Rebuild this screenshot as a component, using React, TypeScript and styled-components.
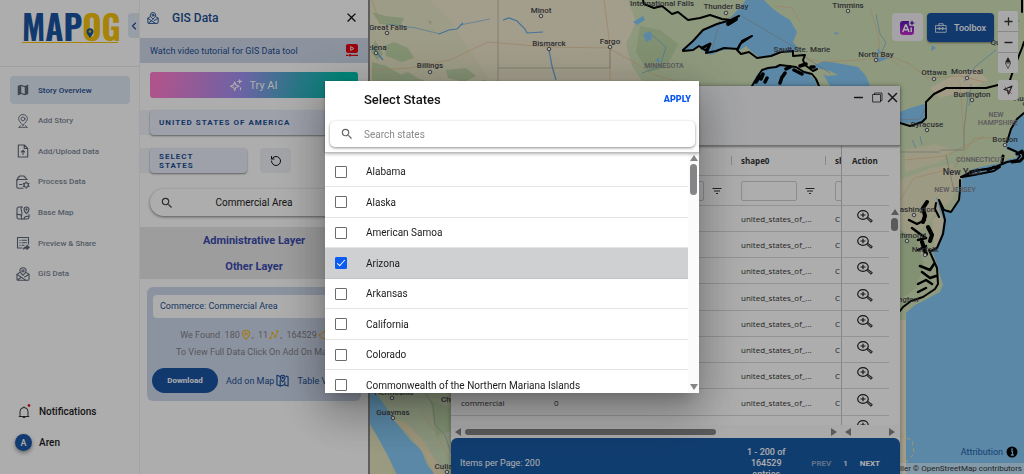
import React from "react";
import styled, { createGlobalStyle, css } from "styled-components";
import { MdSearch, MdClose, MdMap, MdFilterList } from "react-icons/md";
import { RotateCcw } from "lucide-react";

const GlobalStyle = createGlobalStyle`
  *, *::before, *::after { box-sizing: border-box; }
  body { margin: 0; font-family: Roboto, "Liberation Sans", sans-serif; font-size: 10px; color: #1c1c1c; overflow: hidden; }
  button, input { font-family: inherit; font-size: inherit; color: inherit; margin: 0; padding: 0; border: 0; background: none; }
  button { cursor: pointer; }
  a { color: inherit; text-decoration: none; }
  h1, h2, p, ul { margin: 0; padding: 0; font-weight: inherit; list-style: none; }
  svg { display: block; flex: none; }
`;

const navy = "#1a54a2";

/* ---------- page frame ---------- */

const Shell = styled.div`
  display: grid;
  grid-template-columns: 140px 228px minmax(0, 1fr);
  height: 100vh;
  overflow: hidden;
  background: #fff;
`;

/* ---------- sidebar ---------- */

const Sidebar = styled.aside`
  position: relative;
  display: flex;
  flex-direction: column;
  border-right: 1px solid #f0f0f2;
  min-height: 0;
`;

const LogoArea = styled.div`
  height: 67px;
  padding: 8px 0 0 20px;
  border-bottom: 1px solid #ececee;
`;

const CollapseTab = styled.button`
  position: absolute;
  top: 13px;
  right: 0;
  display: grid;
  place-items: center;
  width: 11px;
  height: 25px;
  border-radius: 4px 0 0 4px;
  background: #e0e9f5;
  color: #1a4a90;
`;

const Nav = styled.nav`
  display: grid;
  grid-auto-rows: 1fr;
  align-items: center;
  height: 214px;
  margin: 8px 9px 0 10px;
`;

const NavLink = styled.a<{ $active?: boolean }>`
  display: grid;
  grid-template-columns: 14px 1fr;
  align-items: center;
  gap: 8px;
  height: 28px;
  padding-left: 6px;
  border-radius: 4px;
  font-size: 8px;
  font-weight: 500;
  color: ${(p) => (p.$active ? "#1d4f92" : "#7d8796")};
  background: ${(p) => (p.$active ? "#e1e9f3" : "transparent")};
  svg { color: #5f6878; }
`;

const Account = styled.div`
  display: grid;
  gap: 14px;
  margin-top: auto;
  padding: 0 0 23px 15px;
`;

const AccountRow = styled.a`
  display: grid;
  grid-template-columns: 17px 1fr;
  align-items: center;
  gap: 7px;
  height: 17px;
  font-size: 10px;
  font-weight: 500;
`;

const Avatar = styled.span`
  display: grid;
  place-items: center;
  width: 17px;
  height: 17px;
  border-radius: 50%;
  background: #1b57a8;
  color: #fff;
  font-size: 9px;
  font-weight: 500;
  box-shadow: 0 2px 4px rgba(0, 0, 0, 0.4);
`;

/* ---------- data panel ---------- */

const Panel = styled.section`
  display: flex;
  flex-direction: column;
  min-height: 0;
  color: #1d4f92;
`;

const PanelHeader = styled.header`
  display: flex;
  align-items: center;
  gap: 13px;
  height: 38px;
  padding: 0 9px 3px 7px;
  h1 { flex: 1; font-size: 12px; font-weight: 500; }
`;

const IconButton = styled.button`
  display: grid;
  place-items: center;
  color: #111;
`;

const TutorialBar = styled.a`
  display: flex;
  align-items: center;
  justify-content: space-between;
  height: 25px;
  padding: 0 10px;
  background: #ced9ea;
  font-size: 9px;
`;

const PanelBody = styled.div`
  display: flex;
  flex-direction: column;
  padding: 9px 10px 11px;
`;

const AiButton = styled.button`
  display: flex;
  align-items: center;
  justify-content: center;
  gap: 7px;
  height: 26px;
  border-radius: 3px;
  background: linear-gradient(100deg, #ff7dd0 5%, #a193f4 44%, #3db0c6 70%, #00c6b3 92%);
  color: #fff;
  font-size: 11px;
`;

const FieldStrip = styled.div`
  display: flex;
  gap: 13px;
  height: 25px;
  margin: 12px 0 0 -10px;
  padding-left: 10px;
  background: linear-gradient(90deg, #f2f3f8 30px, transparent 30px);
  & + & { margin-top: 13px; }
`;

const FieldButton = styled.button<{ $narrow?: boolean }>`
  flex: ${(p) => (p.$narrow ? "0 0 97px" : "1")};
  padding: 0 ${(p) => (p.$narrow ? 30 : 9)}px 0 9px;
  border-radius: 4px;
  background: #e9edfb;
  box-shadow: 0 1px 2px rgba(0, 0, 0, 0.45);
  color: #1d4f92;
  font-size: 8px;
  line-height: 9px;
  font-weight: 700;
  letter-spacing: 1px;
  text-align: left;
`;

const ResetButton = styled(IconButton)`
  width: 31px;
  border-radius: 4px;
  background: #f1f2f7;
`;

const PillSearch = styled.label`
  display: grid;
  grid-template-columns: 14px 1fr 14px;
  align-items: center;
  height: 27px;
  margin-top: 16px;
  padding: 0 10px;
  border-radius: 14px;
  box-shadow: 0 1px 3px rgba(0, 0, 0, 0.5);
  color: #444;
  input { min-width: 0; text-align: center; color: #222; outline: 0; }
`;

const LayerTabs = styled.div`
  display: grid;
  grid-auto-rows: 26px;
  background: #e7e7e7;
  button { font-size: 11px; font-weight: 700; color: #3b4bb0; }
`;

const ResultCard = styled.article`
  display: grid;
  gap: 8px;
  margin: 8px 7px 0;
  padding: 8px 6px;
  border-radius: 6px;
  background: #ced9ec;
`;

const ResultTitle = styled.h2`
  padding: 0 7px;
  border-radius: 4px;
  background: #fff;
  font-size: 9px;
  line-height: 23px;
`;

const ResultNotes = styled.div`
  display: grid;
  grid-auto-rows: 17px;
`;

const ResultNote = styled.p`
  display: flex;
  align-items: center;
  justify-content: center;
  gap: 1px;
  font-size: 9px;
  white-space: nowrap;
  color: #7f8186;
  svg { color: #f2b521; }
`;

const ResultActions = styled.div`
  display: flex;
  align-items: center;
  gap: 8px;
  margin-left: -1px;
  font-size: 8px;
  white-space: nowrap;
`;

const DownloadButton = styled.button`
  width: 66px;
  height: 25px;
  border-radius: 13px;
  background: ${navy};
  color: #fff;
  font-weight: 700;
`;

const TextButton = styled.button`
  display: flex;
  align-items: center;
  gap: 2px;
  color: #1d4f92;
  font-size: 9px;
`;

/* ---------- map ---------- */

const MapArea = styled.main`
  position: relative;
  overflow: hidden;
  border-left: 2px solid #8a8a8a;
  background: #85c9f5;
`;

const MapDrawing = styled.svg`
  position: absolute;
  inset: 0;
  width: 100%;
  height: 100%;
`;

const MapTools = styled.div`
  position: absolute;
  top: 11px;
  right: 6px;
  display: flex;
  gap: 4px;
  align-items: flex-start;
`;

const AiTile = styled.button`
  display: grid;
  place-items: center;
  width: 31px;
  height: 28px;
  margin-top: 2px;
  border-radius: 4px;
  background: #f4f0f6;
`;

const ToolboxButton = styled.button`
  display: flex;
  align-items: center;
  gap: 7px;
  height: 29px;
  margin-top: 2px;
  padding: 0 8px;
  border-radius: 4px;
  background: ${navy};
  box-shadow: 0 1px 2px rgba(0, 0, 0, 0.4);
  color: #fff;
  font-size: 9px;
  font-weight: 500;
`;

const ControlStack = styled.div`
  display: grid;
  gap: 7px;
`;

const ControlGroup = styled.div`
  display: grid;
  border-radius: 2px;
  background: #f8f8f8;
  button { display: grid; place-items: center; width: 20px; height: 20px; color: #333; }
  button + button { border-top: 1px solid #c8c8c8; height: 21px; }
`;

const AttributionLink = styled.a`
  position: absolute;
  right: 6px;
  bottom: 16px;
  display: flex;
  align-items: center;
  gap: 3px;
  font-size: 9px;
  color: #1d5ca6;
`;

const Credits = styled.p`
  position: absolute;
  right: 0;
  bottom: 0;
  padding: 0 2px 0 8px;
  background: rgba(255, 255, 255, 0.5);
  font-size: 8px;
  line-height: 11px;
  color: #333;
`;

/* ---------- table window ---------- */

const TableWindow = styled.section`
  position: absolute;
  top: 86px;
  right: 124px;
  width: 449px;
  background: #fff;
  font-family: "Open Sans", "Noto Sans", sans-serif;
  font-size: 8px;
  color: #333;
  box-shadow: 0 0 5px rgba(0, 0, 0, 0.35);
`;

const WindowBar = styled.header`
  position: relative;
  display: flex;
  justify-content: flex-end;
  align-items: flex-start;
  gap: 4px;
  height: 60px;
  padding: 5px 2px 0 0;
  background: #f3f4f6;
  border-bottom: 1px solid #a5a5a7;
  box-shadow: 0 1px 2px rgba(0, 0, 0, 0.4);
  button { display: grid; place-items: center; width: 11px; height: 13px; color: #222; }
  button:first-child { margin-right: 4px; }
`;

const GridArea = styled.div`
  display: grid;
  grid-template-columns: minmax(0, 1fr) 11px;
  height: 279px;
  overflow: hidden;
`;

const DataTable = styled.table`
  width: 100%;
  table-layout: fixed;
  border-collapse: separate;
  border-spacing: 0;
  align-self: start;
  th, td {
    overflow: hidden;
    padding: 0 0 0 10px;
    border-bottom: 1px solid #d9d9d9;
    text-align: left;
    white-space: nowrap;
  }
  thead tr { height: 30px; }
  tbody tr { height: 26px; }
  tbody tr:nth-child(4n) { height: 27px; }
  th:last-child, td:last-child { border-left: 1px solid #c4c4c6; }
  td:last-child { padding: 0 0 4px 15px; }
  thead tr:first-child th:not(:last-child) {
    background: linear-gradient(#c9c9c9, #c9c9c9) 0 10px / 1px 9px no-repeat;
  }
`;

const FilterCell = styled.div`
  display: flex;
  align-items: center;
  gap: 7px;
  input {
    flex: 0 0 56px;
    width: 56px;
    min-width: 0;
    height: 20px;
    border: 1px solid #cfcfd2;
    border-radius: 2px;
  }
`;

const VerticalTrack = styled.div<{ $top: number }>`
  display: flex;
  flex-direction: column;
  align-items: center;
  gap: 3px;
  padding: ${(p) => p.$top}px 0 3px;
`;

const Arrow = styled.span<{ $dir: "up" | "down" | "left" | "right" }>`
  width: 0;
  height: 0;
  flex: none;
  ${(p) => {
    const c = "#858587";
    const v = css`border-left: 4px solid transparent; border-right: 4px solid transparent;`;
    const h = css`border-top: 4px solid transparent; border-bottom: 4px solid transparent;`;
    if (p.$dir === "up") return css`${v} border-bottom: 6px solid ${c};`;
    if (p.$dir === "down") return css`${v} border-top: 6px solid ${c}; margin-top: auto;`;
    if (p.$dir === "left") return css`${h} border-right: 6px solid ${c};`;
    return css`${h} border-left: 6px solid ${c};`;
  }}
`;

const Thumb = styled.span<{ $w: number; $h: number }>`
  width: ${(p) => p.$w}px;
  height: ${(p) => p.$h}px;
  border-radius: 4px;
  background: #858587;
`;

const HorizontalTrack = styled.div`
  display: flex;
  align-items: center;
  gap: 4px;
  height: 13px;
  padding: 0 5px 0 4px;
  background: #fbfbfb;
`;

const TrackSpace = styled.span<{ $w?: number }>`
  flex: ${(p) => (p.$w === undefined ? "1" : `0 0 ${p.$w}px`)};
`;

const TableFooter = styled.footer`
  display: flex;
  align-items: center;
  height: 50px;
  padding: 0 20px 0 9px;
  border-radius: 6px 6px 0 0;
  background: #185aa6;
  font-family: Roboto, "Liberation Sans", sans-serif;
  font-size: 8px;
  font-weight: 500;
  line-height: 11px;
  color: #fff;
`;

const PageSize = styled.span`
  flex: 1;
  font-size: 9px;
  font-weight: 400;
`;

const Range = styled.span`
  width: 50px;
  margin-right: 20px;
  font-size: 9px;
  text-align: center;
`;

const Pager = styled.div`
  display: flex;
  gap: 12px;
  font-size: 8px;
  button { font-weight: 700; }
  button:disabled { color: #8fa9cb; }
`;

/* ---------- dialog ---------- */

const Backdrop = styled.div`
  position: fixed;
  inset: 0;
  display: grid;
  place-items: center;
  background: rgba(0, 0, 0, 0.32);
`;

const Dialog = styled.div`
  display: flex;
  flex-direction: column;
  width: 374px;
  height: 312px;
  max-width: 100%;
  background: #fff;
  box-shadow: 0 11px 15px -7px rgba(0, 0, 0, 0.2), 0 24px 38px 3px rgba(0, 0, 0, 0.14), 0 9px 46px 8px rgba(0, 0, 0, 0.2);
`;

const DialogTop = styled.div`
  position: relative;
  padding: 0 4px 5px 5px;
  border-bottom: 1px solid #bdbdbd;
  box-shadow: 0 1px 3px rgba(0, 0, 0, 0.3);
`;

const DialogTitle = styled.div`
  display: flex;
  align-items: center;
  justify-content: space-between;
  height: 40px;
  padding: 0 4px 4px 34px;
  h2 { font-size: 13px; font-weight: 500; color: #111; }
  button { font-size: 9px; font-weight: 900; color: #0a57f0; }
`;

const SearchField = styled.label`
  display: grid;
  grid-template-columns: 14px 1fr;
  align-items: center;
  gap: 10px;
  height: 26px;
  padding: 0 10px;
  border-radius: 5px;
  box-shadow: 0 1px 3px rgba(0, 0, 0, 0.45);
  color: #666;
  input { outline: 0; min-width: 0; color: #222; }
  input::placeholder { color: #8a8a8a; opacity: 1; }
`;

const ListArea = styled.div`
  display: grid;
  grid-template-columns: minmax(0, 1fr) 11px;
  flex: 1;
  min-height: 0;
  overflow: hidden;
  > div { background: #fbfbfb; }
`;

const StateList = styled.ul`
  padding-top: 4px;
  overflow: hidden;
`;

const StateItem = styled.li`
  height: 30px;
  border-bottom: 1px solid #e4e4e6;
  &:nth-child(even) { height: 31px; }
  &:has(input:checked) { background: #cfd0d2; border-color: #c3c4c6; }
`;

const StateLabel = styled.label`
  display: flex;
  align-items: center;
  gap: 19px;
  height: 100%;
  padding-left: 10px;
  color: #1a1a1a;
`;

const CheckBox = styled.input`
  appearance: none;
  display: grid;
  place-items: center;
  width: 12px;
  height: 12px;
  border: 1px solid #6b6b6b;
  border-radius: 1px;
  background: #fff;
  &:checked { background: #0a5bf2; border-color: #0a5bf2; }
  &:checked::after {
    content: "";
    width: 4px;
    height: 8px;
    margin-top: -3px;
    border: solid #fff;
    border-width: 0 1px 1px 0;
    transform: rotate(42deg);
  }
`;

/* ---------- icons ---------- */

const Glyph = ({ children, size = 14, box = 14, width = 1.1 }: { children: React.ReactNode; size?: number; box?: number; width?: number }) => (
  <svg width={size} height={size} viewBox={`0 0 ${box} ${box}`} fill="none" stroke="currentColor" strokeWidth={width} strokeLinecap="round" strokeLinejoin="round" aria-hidden="true">
    {children}
  </svg>
);

const PinBaseIcon = () => (
  <Glyph width={0.9}>
    <path d="M7 11.2C4.600 8.700 2.600 6.700 2.600 4.700a4.400 4.200 0 0 1 8.800 0C11.400 6.700 9.400 8.700 7 11.200z" />
    <circle cx="7" cy="4.900" r="1.900" />
    <path d="M3 13.300h8M4.600 11.600L3 13.300M9.400 11.600l1.600 1.700" />
  </Glyph>
);
const UploadIcon = () => (
  <Glyph>
    <path d="M2.300 1h6l3.400 3.300V13H2.300zM8.200 1v3.500h3.500M7 10.500v-4M5.400 8L7 6.400 8.600 8" />
  </Glyph>
);
const ProcessIcon = () => (
  <Glyph>
    <path d="M7 13.200H2.200a1.400 1.400 0 0 1-1.400-1.400V4.500h5M.8 6.500l1-3.500 2-2h4l2.500 2.300v1.200M5 4.500h6.200M3.500 9.500h2.500" />
    <circle cx="10.200" cy="10" r="2.200" />
    <path d="M10.200 6.700v1M10.200 12.300v1M7.400 8.400l.9.500M12.100 11.100l.9.500M13 8.400l-.9.500M8.300 11.100l-.9.500" />
  </Glyph>
);
const BaseMapIcon = () => (
  <Glyph>
    <path d="M6.500 1H2.800A1.800 1.800 0 0 0 1 2.800v8.400A1.800 1.800 0 0 0 2.800 13h8.400a1.800 1.800 0 0 0 1.800-1.800V8.500" />
    <path d="M5.200 1c-1 3.500 1.800 4.500.5 8-.5 1.300-.7 3 0 4M1 8.500c1.800-.3 3.200.2 4.600 1M8 13c0-2 2-3 4.800-2.600" />
    <path d="M10.500 7.600C8.900 6 8 4.900 8 3.500a2.500 2.500 0 0 1 5 0c0 1.400-.9 2.500-2.500 4.100z" />
    <circle cx="10.500" cy="3.500" r=".6" />
  </Glyph>
);
const ShareDocIcon = () => (
  <Glyph>
    <path d="M6 12H1.500V1.500h11V8M3.800 4.200h.4M6 4.200h4.500M3.800 6.700h.4M6 6.700h4.500M3.800 9.200h.4M6 9.200h2" />
    <path d="M7.500 13c.4-1.700 1.600-2.300 3.400-2.300V9.200l2.400 2.200-2.400 2v-1.500c-1.500 0-2.500.2-3.400 1.100z" fill="currentColor" />
  </Glyph>
);
const GisIcon = ({ size = 14 }: { size?: number }) => (
  <Glyph size={size}>
    <path d="M3.600 5.600L1 7.200v5A1.100 1.100 0 0 0 2.100 13.300h9.800A1.100 1.100 0 0 0 13 12.200v-5l-2.600-1.600" />
    <path d="M1.200 7.500l8.500 5.600M12.800 7.500L8.600 9.900M5 10.500l-3.200 2.300" />
    <path d="M7 8.300C5 6.600 3.900 5.300 3.900 3.800a3.100 3.100 0 0 1 6.200 0c0 1.500-1.100 2.800-3.100 4.500z" />
    <circle cx="7" cy="3.800" r="1.100" />
  </Glyph>
);
const BellIcon = () => (
  <svg width="17" height="15" viewBox="0 0 17 15" fill="none" stroke="#333" aria-hidden="true">
    <path d="M5 11.500V7.500a4 4 0 0 1 8 0v4l1 1H4zM7.800 13.500h2.400M9 2.500v1" strokeLinejoin="round" />
    <circle cx="14" cy="1.500" r="1.400" fill="#e3202c" stroke="none" />
  </svg>
);
const VideoIcon = () => (
  <svg width="12" height="13" viewBox="0 0 12 13" aria-hidden="true">
    <rect width="12" height="9" rx="2" fill="#e30613" />
    <path d="M4.700 2.600l3.200 1.900-3.200 1.900z" fill="none" stroke="#fff" strokeWidth=".9" />
    <path d="M0 11.300h2.500M5 11.300h7" stroke="#e30613" strokeWidth="1.200" />
    <circle cx="4" cy="11.300" r="1.200" fill="#e30613" />
  </svg>
);
const SparkIcon = () => (
  <Glyph size={12} width={1.3}>
    <path d="M5.500 3.500L6.900 7l3.600 1.400L6.900 9.800 5.500 13.300 4.100 9.800.5 8.400 4.100 7zM11.300.8v4M9.300 2.800h4M12.300 10.200v2.400" />
  </Glyph>
);
const MapPinIcon = () => (
  <Glyph size={13} width={1.2}>
    <path d="M4 2.500L1 1.500v10l4 1.500 4-1.500 4 1.500V3l-2-.7M4.500 7v6M9.500 8.500v3" />
    <path d="M7.200 8.500C5.500 6.800 4.600 5.500 4.600 4a2.600 2.600 0 0 1 5.200 0c0 1.500-.9 2.800-2.600 4.500z" />
    <circle cx="7.200" cy="4" r=".7" />
  </Glyph>
);
const PointIcon = () => (
  <Glyph size={10} width={1.5}>
    <path d="M7 13C4 10 2 8 2 5.500a5 5 0 0 1 10 0C12 8 10 10 7 13z" />
    <circle cx="7" cy="5.500" r="1.600" />
  </Glyph>
);
const LineIcon = () => (
  <Glyph size={10} width={1.2}>
    <path d="M2 11.500l3-7 4 5 3-7.500" />
    <path d="M1.200 10.700h1.600v1.600H1.200zM4.200 3.500h1.600v1.600H4.200zM8.200 8.800h1.600v1.600H8.200zM11.200 1.200h1.600v1.600h-1.600z" fill="currentColor" />
  </Glyph>
);
const PolygonIcon = () => (
  <Glyph size={10} width={1.3}>
    <path d="M2 7l7.500-5 3 3-2.500 7-5.500-1z" />
    <circle cx="2" cy="7" r="1" /><circle cx="9.500" cy="2" r="1" /><circle cx="10" cy="12" r="1" />
  </Glyph>
);
const ZoomToIcon = () => (
  <svg width="16" height="13" viewBox="0 0 16 13" fill="none" stroke="#222" aria-hidden="true">
    <ellipse cx="6" cy="5" rx="5.300" ry="4.400" strokeWidth="1.200" />
    <path d="M3.500 5h5M6 2.800v4.400" strokeWidth="1.200" />
    <path d="M9.600 8.300l1.200-.9 4.500 3.200-1.200 1.700z" fill="#999" strokeWidth="1" />
  </svg>
);
const AiIcon = () => (
  <svg width="15" height="15" viewBox="0 0 15 15" aria-hidden="true">
    <defs>
      <linearGradient id="aiFill" x1="0" y1="0" x2="0" y2="1">
        <stop offset="0" stopColor="#5518b0" />
        <stop offset="1" stopColor="#c92bd0" />
      </linearGradient>
    </defs>
    <rect x="0" y="1" width="14" height="14" rx="3" fill="url(#aiFill)" />
    <circle cx="12" cy="3" r="3.300" fill="#f4f0f6" />
    <path d="M12 0l.8 2.200L15 3l-2.200.8L12 6l-.8-2.200L9 3l2.200-.8z" fill="#4b17a8" />
    <path d="M2.800 12L5.500 5h.8L9 12M3.800 9.800H8M11.200 7.500V12" fill="none" stroke="#fff" strokeWidth="1.500" />
  </svg>
);
const ToolboxIcon = () => (
  <Glyph size={12} width={0.9}>
    <path d="M1 4.200h12V12H1zM4.500 4.200V2h5v2.200M1 7.800h3.500M9.500 7.800H13M5.800 7.800h2.400M4.500 7v1.700h1.300V7zM8.200 7v1.700h1.300V7z" />
  </Glyph>
);

/* ---------- map content ---------- */

type Place = [string, number, number, number?, number?];

/* name, label centre x, baseline y, dot x, dot y */
const places: Place[] = [
  ["International Falls", 662, 6],
  ["Thunder Bay", 726, 9, 726, 13],
  ["Timmins", 848, 8, 848, 11],
  ["Minot", 541, 13, 541, 16],
  ["Great Falls", 388, 30, 387, 33],
  ["Helena", 374, 50, 376, 53],
  ["Bismarck", 549, 46, 549, 49],
  ["Fargo", 610, 44, 610, 47],
  ["Billings", 430, 68, 430, 72],
  ["Sault Ste. Marie", 802, 52],
  ["North Bay", 876, 57, 876, 60],
  ["Ottawa", 934, 75, 934, 79],
  ["Montreal", 967, 74, 967, 78],
  ["Québec", 1004, 45],
  ["Burlington", 972, 97, 972, 100],
  ["Augusta", 1029, 101, 1025, 104],
  ["Syracuse", 927, 127, 927, 130],
  ["Boston", 1005, 142, 1005, 145],
  ["Washington", 914, 212, 914, 215],
  ["Richmond", 908, 238, 907, 241],
  ["Norfolk", 925, 252, 925, 255],
  ["Wilmington", 898, 302],
  ["Guaymas", 393, 415, 393, 418],
  ["Hermosillo", 394, 395, 392, 398],
  ["Chihuahua", 460, 402],
  ["Culiacán", 450, 469, 447, 472],
];

const regions: [string, number, number][] = [
  ["MINNESOTA", 664, 68],
  ["NEW", 996, 117],
  ["HAMPSHIRE", 998, 125],
  ["CONNECTICUT", 980, 162],
  ["NEW JERSEY", 955, 192],
];

const MapPicture = () => (
  <MapDrawing viewBox="370 0 654 474" preserveAspectRatio="xMaxYMin slice" role="img" aria-label="Map of North America">
    <rect x="370" width="654" height="474" fill="#f0e9ce" />
    {/* woodland */}
    <path d="M628 0H1024V320H700V100L648 90 632 66 626 44 636 22z" fill="#d2e2b8" />
    <path d="M370 0h60l20 20 40 60H370z" fill="#e8e6c6" />
    <path d="M370 120h82v354h-82z" fill="#cddcb8" />
    <g fill="#efe5c4">
      <path d="M900 180l30-12 22-4 8 14-8 22-14 12-20 20-18 8zM905 150l30-6 20 6-15 12-35 10z" opacity=".7" />
      <path d="M930 88l26-14 22-6 10 12-18 10-30 8zM945 210l4 20-8 20-6-2-3-28z" />
    </g>
    <g fill="#b9d3a3" opacity=".8">
      <path d="M384 46l10-4 14 6 6 10-12 4-16-6zM372 12l14 4 18 2-4 8-20-2zM372 62l14 4 18 10 20 4 8 6h-60zM446 70l20-2 10 8-12 6-16-4zM428 20l4 2-2 3zM482 80l8 1v3h-8z" />
      <path d="M375 40l8 14-6 6-6-8zM392 78l16-6 14 9h-26zM640 26l20 4 18 14-12 24-18 4-12-20zM900 230l16 8 8 26-8 24-16 12zM430 400l20 8v24l-14 4z" />
    </g>
    {/* water */}
    <g fill="#85c9f5">
      <path d="M683 50l7-7 12-12 14-6 14-7 12-13 4-5h18l8 8 8 6 10 6 7 12-4 10 7 8-8 3-12-1-8 4-12 2-8-6-6-6-7 5-8-2-11 2-9 4-7-3-6-6-8 5z" />
      <path d="M751 86l6-12 8-5 14-3 14 1 4 3 10 2 8 8 2 6zM812 66l12-5 18 3 16 3 8 9 4 10h-40l-8-14z" />
      <path d="M900 112l10-4 14-4 3 3-2 15-25 2z" />
      <path d="M1024 113l-7 6-6 10-4 14-1 6 8 3 3 6-8 1-8 4-16 3-12 3-11 8-1 10-2 14-8 11-7-3-6-10-2-2 4 14 4 10-3 15-6 14-3 1 4 10 4 14 3 10-3 7-13 7-12 6-9 8v168h124z" />
      <path d="M370 393h6l10 14 7 12 10 12 8 10 10 8 6 16 8 9h-38l-6-12-8-14-7-14-6-8z" />
      <path d="M633 22l10-6 2 4-8 5zM643 34l8-3 1 8-6 3zM655 60l5-2-1 5zM875 56l14 2-10 4zM780 25l8 1-4 2zM834 32l5 1-3 2zM878 48l4 5-5 1zM932 45l4 3-5 3z" />
    </g>
    <path d="M804 66l12 2 14 3 8 4-10 1-14-4-10-1z" fill="#d2e2b8" />
    <path d="M370 424l8 14 10 18 7 18h-25z" fill="#e3e3bd" />
    <path d="M394 420l14 14 16 20 10 20h10l-20-32-18-20z" fill="#e9dcb6" />
    {/* rivers */}
    <g fill="none" stroke="#62a9e2" strokeWidth="1.200">
      <path d="M503 20l6-2 8 3 8 8 2 4 16-1M439 34l10-4 8-1 6-6M549 50l3 16 4 14M373 48l10 12" />
      <path d="M386 24l30 4 24 6M460 25l30-6M876 14l4 20 6 8-4 10M996 50l-20 16-12 16M971 84l-2 22M1020 20l-18 14M912 140l4 8M920 136l2 9M652 35l14 12-6 20-18 6" strokeWidth=".6" />
    </g>
    {/* roads and borders */}
    <g fill="none" stroke="#e8c193" strokeWidth=".7">
      <path d="M372 0l8 24M370 70l40-2 40-8 38-18 60 5 60 1 26 14 18 12 26 8M604 0l4 30 2 20 0 30M774 6l18 2 8 14M800 56l20 6 40-2 30-4 20 8 18 14 32-2 24 6M870 8l8 26 2 18 20 14M900 200l14-22 40-10 20-30 18 0M905 160l40-4 40-20M960 84l2 28 2 26M420 410l14 20 16 30" />
    </g>
    <g fill="none" stroke="#9d9d99" strokeWidth=".6">
      <path d="M498 0v68h112M498 68v20M610 50v18M722 20l18-5 54 32 14 12 22 14M720 20l-8 30M900 120l20-1 6-12M940 150h24v-20l4-34M900 152h40M946 155l8 36M425 393l8 12 2 20 10 10 6 18" />
    </g>
    {/* coastline */}
    <g fill="none" stroke="#000" strokeWidth="2" strokeLinecap="round" strokeLinejoin="round">
      <path d="M643 0l1 4 10 4 8-2 10 8 6-2 10 8 12-2 10-3 12 4 8 1M683 50l10-9 10-11 14-6 14-4 8-4M683 51l10-1 6-4 6 4 3-2-2 5 10-2 8-3 14 1 4-8 10-5-12 8-3 6 4 4 8-2 8 6 14-2 10-4 12-1 0 5 12-1-2 5 2 5 8 6 4-2" />
      <path d="M752 86l6-10 4-6 6-2 8-1 4-2 8 1 8 1 8 5 8 2 4 5 3 7" />
      <path d="M728 24l8-5" strokeWidth="4" />
      <path d="M702 48l8-4-3 7" strokeWidth="3" />
      <path d="M756 82l4-6M761 79l2-5M765 82l2-4M780 83l2-6M783 76l2-3M786 69l4-2M794 70l8 4M800 66l6-2M811 67l3 0" strokeWidth="3.500" />
      <path d="M900 123l10 3 12-4 4-4 0-16 8-8 12-6 40 0 12-3M1010 80l4-12 8-20 2-6M1022 0v12M1024 113l-7 6-6 10-4 13M1008 148l9 4 3 4-3 4-10 2-14 6-18 3-14 6" />
      <path d="M962 177l12-2 20-4 6-4-14 2-14 2zM960 180v10l-1 10-8 12-7-2-5-10 4 12 2 8-2 14-6 14-6 3M936 203l-1 6 4 8M929 250l8 18 1 16-3 5-12 8-12 4-8 6-3 4" />
      <path d="M909 220l8 4 8-4M912 228l8 6 6 4-8 2M918 250l8-4M920 266l10 4 4-6M922 272l8 6 6-2M918 284l8-4 6 4M918 292l8-4" strokeWidth="2.500" />
      <path d="M927 202l-4 6 2 8-2 6M928 227l4 8-2 6M922 242l4 12" strokeWidth="4" />
      <path d="M1003 156l-1 6M1017 154l5-3 2 6-4 4M1012 162l8-1M988 170l6-3" strokeWidth="3" />
    </g>
    <path d="M900 436l12 4 2 14-8 8" fill="none" stroke="#e9dfa8" strokeWidth="1" strokeDasharray="4 3" />
    <g fontFamily="Roboto, sans-serif" textAnchor="middle" fill="#46464c">
      {places.map(([name, x, y]) => (
        <text key={name} x={x} y={y} fontSize="8" fontWeight="500">{name}</text>
      ))}
      <text x="962" y="175" fontSize="9" fontWeight="500">New York</text>
      {regions.map(([name, x, y]) => (
        <text key={name} x={x} y={y} fontSize="7" fill="#85808a" fontWeight="500">{name}</text>
      ))}
    </g>
    <g fill="#fff" stroke="#5a5a5e" strokeWidth="1">
      {places.filter((p) => p[3] !== undefined).map(([name, , , dx, dy]) => (
        <circle key={name} cx={dx} cy={dy} r="1.800" />
      ))}
    </g>
  </MapDrawing>
);

/* ---------- data ---------- */

const navItems: { label: string; icon: React.ReactNode }[] = [
  { label: "Story Overview", icon: <MdMap size={14} /> },
  { label: "Add Story", icon: <PinBaseIcon /> },
  { label: "Add/Upload Data", icon: <UploadIcon /> },
  { label: "Process Data", icon: <ProcessIcon /> },
  { label: "Base Map", icon: <BaseMapIcon /> },
  { label: "Preview & Share", icon: <ShareDocIcon /> },
  { label: "GIS Data", icon: <GisIcon /> },
];

const states = ["Alabama", "Alaska", "American Samoa", "Arizona", "Arkansas", "California", "Colorado", "Commonwealth of the Northern Mariana Islands"];

const Logo = () => (
  <svg width="104" height="44" viewBox="0 0 104 44" role="img" aria-label="MAPOG">
    <text x="2" y="33" fontFamily="Oswald, 'Roboto Condensed', 'Liberation Sans Narrow', sans-serif" fontSize="33" fontWeight="700" fill={navy}>
      MAP<tspan fill="#f7c30c">OG</tspan>
    </text>
    <path d="M2 34.500h96" stroke="#f7c30c" strokeWidth="1.200" />
    <path d="M70 30c-2-3-3.500-4.400-3.500-6.200a3.500 3.500 0 0 1 7 0c0 1.800-1.500 3.200-3.500 6.200z" fill={navy} />
    <circle cx="70" cy="23.500" r="1.300" fill="#f7c30c" />
  </svg>
);

const FilterInput = ({ name }: { name: string }) => (
  <FilterCell>
    <input type="text" aria-label={`Filter ${name}`} />
    <MdFilterList size={12} />
  </FilterCell>
);

export default function App() {
  return (
    <>
      <GlobalStyle />
      <Shell>
        <Sidebar>
          <LogoArea><Logo /></LogoArea>
          <CollapseTab aria-label="Collapse menu">
            <Glyph size={8} box={8}><path d="M5.500 1L2.500 4l3 3" /></Glyph>
          </CollapseTab>
          <Nav>
            {navItems.map((item, i) => (
              <NavLink key={item.label} href="#" $active={i === 0}>
                {item.icon}
                {item.label}
              </NavLink>
            ))}
          </Nav>
          <Account>
            <AccountRow href="#"><BellIcon />Notifications</AccountRow>
            <AccountRow href="#"><Avatar>A</Avatar>Aren</AccountRow>
          </Account>
        </Sidebar>

        <Panel>
          <PanelHeader>
            <GisIcon size={12} />
            <h1>GIS Data</h1>
            <IconButton aria-label="Close panel"><MdClose size={15} /></IconButton>
          </PanelHeader>
          <TutorialBar href="#">
            Watch video tutorial for GIS Data tool
            <VideoIcon />
          </TutorialBar>
          <PanelBody>
            <AiButton><SparkIcon />Try AI</AiButton>
            <FieldStrip>
              <FieldButton>UNITED STATES OF AMERICA</FieldButton>
            </FieldStrip>
            <FieldStrip>
              <FieldButton $narrow>SELECT STATES</FieldButton>
              <ResetButton aria-label="Reset"><RotateCcw size={12} /></ResetButton>
            </FieldStrip>
            <PillSearch>
              <MdSearch size={14} />
              <input type="text" aria-label="Search layers" defaultValue="Commercial Area" />
            </PillSearch>
          </PanelBody>
          <LayerTabs>
            <button>Administrative Layer</button>
            <button>Other Layer</button>
          </LayerTabs>
          <ResultCard>
            <ResultTitle>Commerce: Commercial Area</ResultTitle>
            <ResultNotes>
              <ResultNote>We Found&nbsp; 180 <PointIcon />,&nbsp; 11 <LineIcon />,&nbsp; 164529 <PolygonIcon /></ResultNote>
              <ResultNote>To View Full Data Click On Add On Map</ResultNote>
            </ResultNotes>
            <ResultActions>
              <DownloadButton>Download</DownloadButton>
              <TextButton>Add on Map <MapPinIcon /></TextButton>
              <TextButton>Table View</TextButton>
            </ResultActions>
          </ResultCard>
        </Panel>

        <MapArea>
          <MapPicture />
          <AttributionLink href="#">
            Attribution
            <svg width="12" height="12" viewBox="0 0 12 12" aria-hidden="true">
              <circle cx="6" cy="6" r="5.500" fill="#000" />
              <path d="M5 5.200h1.500V9M4.800 9h3" stroke="#85c9f5" strokeWidth="1.300" fill="none" />
              <circle cx="6" cy="3.200" r=".9" fill="#85c9f5" />
            </svg>
          </AttributionLink>
          <Credits>© MapTiler © OpenStreetMap contributors</Credits>
          <TableWindow>
            <WindowBar>
              <button aria-label="Minimize"><Glyph size={11} box={11} width={1.3}><path d="M1.500 5.500h8" /></Glyph></button>
              <button aria-label="Restore"><Glyph size={11} box={11} width={0.8}><path d="M1 2.500h7.500V10H1zM2.500 2.500V1H10v7.500H8.500" /></Glyph></button>
              <button aria-label="Close"><Glyph size={11} box={11} width={1.5}><path d="M1.500 1.500l8 8M9.500 1.500l-8 8" /></Glyph></button>
            </WindowBar>
            <GridArea>
              <DataTable>
                <colgroup>
                  <col /><col width="94" /><col width="93" /><col width="94" /><col width="16" /><col width="48" />
                </colgroup>
                <thead>
                  <tr>
                    <th>landuse</th><th>id</th><th>name</th><th>shape0</th><th>shape1</th><th>Action</th>
                  </tr>
                  <tr>
                    <td><FilterInput name="landuse" /></td>
                    <td><FilterInput name="id" /></td>
                    <td><FilterInput name="name" /></td>
                    <td><FilterInput name="shape0" /></td>
                    <td><FilterInput name="shape1" /></td>
                    <td />
                  </tr>
                </thead>
                <tbody>
                  {Array.from({ length: 9 }, (_, i) => (
                    <tr key={i}>
                      <td>commercial</td><td>0</td><td /><td>united_states_of_...</td><td>C</td>
                      <td><IconButton aria-label="Zoom to feature"><ZoomToIcon /></IconButton></td>
                    </tr>
                  ))}
                </tbody>
              </DataTable>
              <VerticalTrack $top={63}>
                <Arrow $dir="up" />
                <Thumb $w={7} $h={13} />
                <Arrow $dir="down" />
              </VerticalTrack>
            </GridArea>
            <HorizontalTrack>
              <Arrow $dir="left" />
              <Thumb $w={251} $h={6} />
              <TrackSpace />
              <Arrow $dir="right" />
              <TrackSpace $w={0} />
              <Arrow $dir="left" />
              <TrackSpace $w={30} />
              <Arrow $dir="right" />
            </HorizontalTrack>
            <TableFooter>
              <PageSize>Items per Page: 200</PageSize>
              <Range>1 - 200 of 164529 entries</Range>
              <Pager>
                <button disabled>PREV</button>
                <span>1</span>
                <button>NEXT</button>
              </Pager>
            </TableFooter>
          </TableWindow>
          <MapTools>
            <AiTile aria-label="AI tools"><AiIcon /></AiTile>
            <ToolboxButton><ToolboxIcon />Toolbox</ToolboxButton>
            <ControlStack>
              <ControlGroup>
                <button aria-label="Zoom in"><Glyph size={9} box={9} width={1.3}><path d="M1 4.500h7M4.500 1v7" /></Glyph></button>
                <button aria-label="Zoom out"><Glyph size={9} box={9} width={1.3}><path d="M1 4.500h7" /></Glyph></button>
                <button aria-label="Reset bearing">
                  <svg width="8" height="12" viewBox="0 0 8 12" aria-hidden="true">
                    <path d="M4 0l3 5.500H1z" fill="#333" />
                    <path d="M4 11.500L1.300 6h5.400z" fill="none" stroke="#777" />
                  </svg>
                </button>
              </ControlGroup>
              <ControlGroup>
                <button aria-label="My location">
                  <Glyph size={10} box={10} width={1.2}>
                    <path d="M2 2l6.500 6.500" stroke="#e0323c" strokeWidth=".7" />
                    <path d="M9 1L1 4.500l3.500 1L5.500 9z" />
                  </Glyph>
                </button>
              </ControlGroup>
            </ControlStack>
          </MapTools>
        </MapArea>
      </Shell>

      <Backdrop>
        <Dialog role="dialog" aria-modal="true" aria-labelledby="dialog-title">
          <DialogTop>
            <DialogTitle>
              <h2 id="dialog-title">Select States</h2>
              <button>APPLY</button>
            </DialogTitle>
            <SearchField>
              <MdSearch size={14} />
              <input type="search" placeholder="Search states" aria-label="Search states" />
            </SearchField>
          </DialogTop>
          <ListArea>
            <StateList>
              {states.map((name) => (
                <StateItem key={name}>
                  <StateLabel>
                    <CheckBox type="checkbox" defaultChecked={name === "Arizona"} />
                    {name}
                  </StateLabel>
                </StateItem>
              ))}
            </StateList>
            <VerticalTrack $top={2}>
              <Arrow $dir="up" />
              <Thumb $w={7} $h={31} />
              <Arrow $dir="down" />
            </VerticalTrack>
          </ListArea>
        </Dialog>
      </Backdrop>
    </>
  );
}
